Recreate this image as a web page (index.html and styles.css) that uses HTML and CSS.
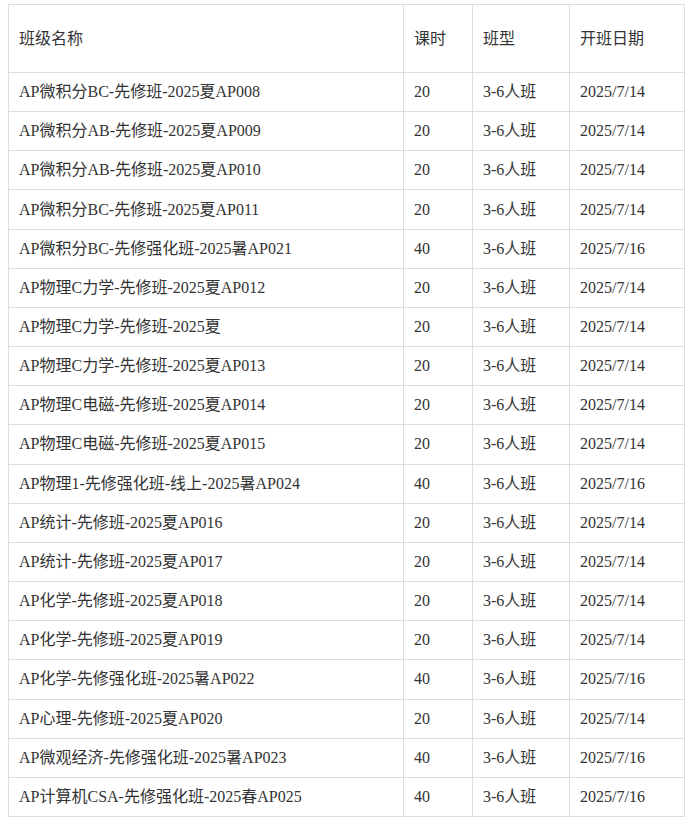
FILE: index.html
```html
<!DOCTYPE html>
<html lang="zh-CN">
<head>
<meta charset="utf-8">
<title>AP先修班</title>
<link rel="stylesheet" href="styles.css">
</head>
<body>
<table class="course-table">
  <colgroup>
    <col class="c-name">
    <col class="c-hours">
    <col class="c-type">
    <col class="c-date">
  </colgroup>
  <thead>
    <tr><th>班级名称</th><th>课时</th><th>班型</th><th>开班日期</th></tr>
  </thead>
  <tbody>
    <tr><td>AP微积分BC-先修班-2025夏AP008</td><td>20</td><td>3-6人班</td><td>2025/7/14</td></tr>
    <tr><td>AP微积分AB-先修班-2025夏AP009</td><td>20</td><td>3-6人班</td><td>2025/7/14</td></tr>
    <tr><td>AP微积分AB-先修班-2025夏AP010</td><td>20</td><td>3-6人班</td><td>2025/7/14</td></tr>
    <tr><td>AP微积分BC-先修班-2025夏AP011</td><td>20</td><td>3-6人班</td><td>2025/7/14</td></tr>
    <tr><td>AP微积分BC-先修强化班-2025暑AP021</td><td>40</td><td>3-6人班</td><td>2025/7/16</td></tr>
    <tr><td>AP物理C力学-先修班-2025夏AP012</td><td>20</td><td>3-6人班</td><td>2025/7/14</td></tr>
    <tr><td>AP物理C力学-先修班-2025夏</td><td>20</td><td>3-6人班</td><td>2025/7/14</td></tr>
    <tr><td>AP物理C力学-先修班-2025夏AP013</td><td>20</td><td>3-6人班</td><td>2025/7/14</td></tr>
    <tr><td>AP物理C电磁-先修班-2025夏AP014</td><td>20</td><td>3-6人班</td><td>2025/7/14</td></tr>
    <tr><td>AP物理C电磁-先修班-2025夏AP015</td><td>20</td><td>3-6人班</td><td>2025/7/14</td></tr>
    <tr><td>AP物理1-先修强化班-线上-2025暑AP024</td><td>40</td><td>3-6人班</td><td>2025/7/16</td></tr>
    <tr><td>AP统计-先修班-2025夏AP016</td><td>20</td><td>3-6人班</td><td>2025/7/14</td></tr>
    <tr><td>AP统计-先修班-2025夏AP017</td><td>20</td><td>3-6人班</td><td>2025/7/14</td></tr>
    <tr><td>AP化学-先修班-2025夏AP018</td><td>20</td><td>3-6人班</td><td>2025/7/14</td></tr>
    <tr><td>AP化学-先修班-2025夏AP019</td><td>20</td><td>3-6人班</td><td>2025/7/14</td></tr>
    <tr><td>AP化学-先修强化班-2025暑AP022</td><td>40</td><td>3-6人班</td><td>2025/7/16</td></tr>
    <tr><td>AP心理-先修班-2025夏AP020</td><td>20</td><td>3-6人班</td><td>2025/7/14</td></tr>
    <tr><td>AP微观经济-先修强化班-2025暑AP023</td><td>40</td><td>3-6人班</td><td>2025/7/16</td></tr>
    <tr><td>AP计算机CSA-先修强化班-2025春AP025</td><td>40</td><td>3-6人班</td><td>2025/7/16</td></tr>
  </tbody>
</table>
</body>
</html>
```
FILE: styles.css
```css
html, body {
  background: #ffffff;
}
body {
  margin: 4px 8px 0 8px;
  font-family: "Liberation Serif", "Noto Sans CJK SC", serif;
  font-size: 16px;
  color: #333333;
}
.course-table {
  border-collapse: collapse;
  table-layout: fixed;
  width: 676px;
}
.c-name { width: 395px; }
.c-hours { width: 69px; }
.c-type { width: 97px; }
.c-date { width: 115px; }
.course-table th,
.course-table td {
  border: 1px solid #dddddd;
  padding: 0 10px;
  text-align: left;
  font-weight: normal;
  vertical-align: middle;
  white-space: nowrap;
  line-height: 20px;
}
.course-table thead tr { height: 68px; }
.course-table tbody tr { height: 39.16px; }
```
